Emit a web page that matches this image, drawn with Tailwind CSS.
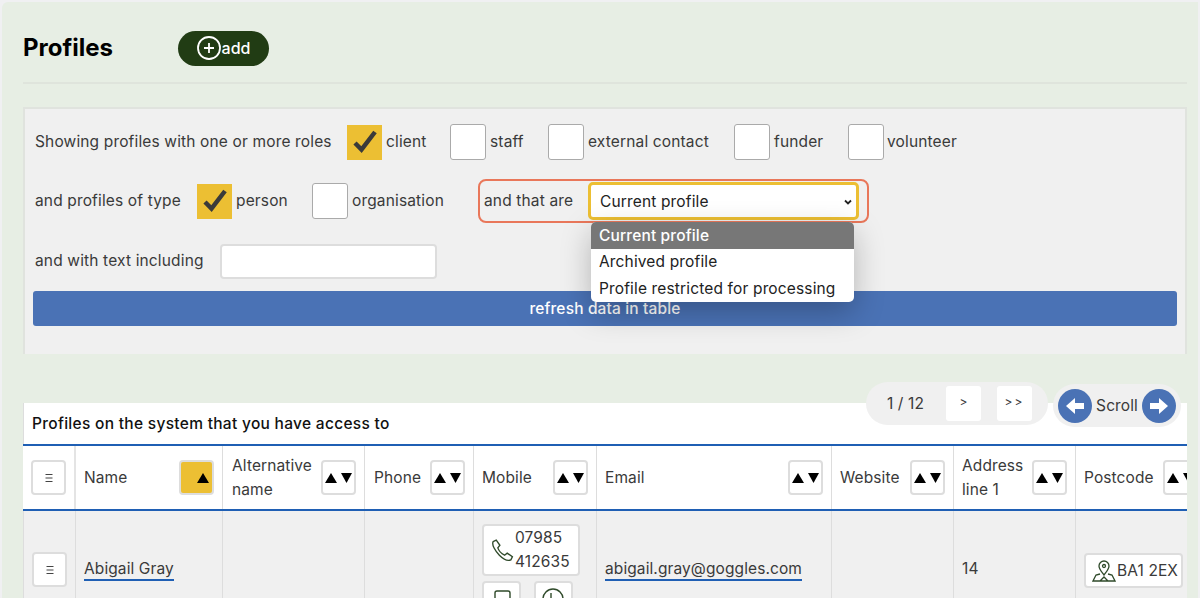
<!doctype html>
<html lang="en">
  <head>
    <meta charset="UTF-8" />
    <title>Profiles</title>
    <script src="https://cdn.jsdelivr.net/npm/@tailwindcss/browser@4"></script>
  </head>
  <body class="bg-[#f0f0f2]">
    <div class="relative h-[598px] w-[1200px] overflow-hidden pl-[2px] pt-[2px] font-['Inter',sans-serif] text-[#3a3a3a]">
      <main class="h-[596px] w-[1196px] rounded-tl-[6px] bg-[#e7eee4] pl-[21px] pr-[11px]">

        <!-- Title -->
        <header class="flex h-[82px] items-center border-b-2 border-[#dfe4dc] pt-[12px]">
          <h1 class="w-[155px] text-[24px] font-bold text-black">Profiles</h1>
          <button class="flex h-[35px] w-[91px] items-center justify-center gap-[1px] rounded-full bg-[#213c14] text-[16px] font-medium text-white">
            <svg class="h-6 w-6" viewBox="0 0 24 24" fill="none" stroke="currentColor" stroke-width="1.8"><circle cx="12" cy="12" r="11"/><path d="M12 7v10M7 12h10"/></svg>
            add
          </button>
        </header>

        <!-- Filters -->
        <section class="relative mt-[23px] h-[247px] border-x-2 border-t-2 border-[#e0e3de] bg-[#f0f0f0] px-[10px] text-[15.5px] tracking-[0.15px]">
          <div class="mt-[15px] flex h-[36px] items-center">
            <span class="w-[312px]">Showing profiles with one or more roles</span>
            <span class="flex h-[35px] w-[35px] items-center justify-center bg-[#ecbf33]">
              <svg class="h-7 w-7" viewBox="0 0 28 28" fill="none" stroke="#3a3a3a" stroke-width="4.5"><path d="M4 15l6.5 6.5L24 4"/></svg>
            </span>
            <span class="ml-[4px] w-[64px]">client</span>
            <span class="h-[36px] w-[36px] rounded-[3px] border border-[#aaa] bg-white"></span>
            <span class="ml-[4px] w-[58px]">staff</span>
            <span class="h-[36px] w-[36px] rounded-[3px] border border-[#aaa] bg-white"></span>
            <span class="ml-[4px] w-[146px]">external contact</span>
            <span class="h-[36px] w-[36px] rounded-[3px] border border-[#aaa] bg-white"></span>
            <span class="ml-[4px] w-[74px]">funder</span>
            <span class="h-[36px] w-[36px] rounded-[3px] border border-[#aaa] bg-white"></span>
            <span class="ml-[3px]">volunteer</span>
          </div>

          <div class="mt-[23px] flex h-[36px] items-center">
            <span class="w-[162px]">and profiles of type</span>
            <span class="flex h-[35px] w-[35px] items-center justify-center bg-[#ecbf33]">
              <svg class="h-7 w-7" viewBox="0 0 28 28" fill="none" stroke="#3a3a3a" stroke-width="4.5"><path d="M4 15l6.5 6.5L24 4"/></svg>
            </span>
            <span class="ml-[4px] w-[76px]">person</span>
            <span class="h-[36px] w-[36px] rounded-[3px] border border-[#aaa] bg-white"></span>
            <span class="ml-[4px] w-[126px]">organisation</span>
            <div class="flex h-[44px] w-[391px] items-center rounded-[8px] border-2 border-[#e9775a] pl-[4px]">
              <span class="w-[104px]">and that are</span>
              <div class="flex h-[38px] w-[271px] items-center justify-between rounded-[5px] border-[3px] border-[#ecbf33] bg-white pl-[9px] pr-[3px] pt-[1px] text-[#222]">
                Current profile
                <svg class="h-[10px] w-[10px]" viewBox="0 0 10 10" fill="none" stroke="#222" stroke-width="1.8"><path d="M2 3.5l3 3 3-3"/></svg>
              </div>
            </div>
          </div>

          <div class="mt-[24px] flex h-[36px] items-center">
            <span class="w-[185px]">and with text including</span>
            <span class="h-[35px] w-[217px] rounded-[4px] border-2 border-[#ddd] bg-white"></span>
          </div>

          <button class="-mx-[2px] mt-[12px] block h-[35px] w-[calc(100%+4px)] rounded-[3px] bg-[#4a72b5] text-[15.5px] font-medium text-white">refresh data in table</button>

          <!-- Open select list -->
          <div class="absolute left-[566px] top-[113px] z-10 w-[263px] overflow-hidden rounded-[5px] bg-white text-[#222] shadow-[0_10px_30px_rgba(0,0,0,0.25)]">
            <div class="flex h-[27px] items-center bg-[#777] pl-[8px] pt-[1px] font-medium text-white">Current profile</div>
            <div class="flex h-[26px] items-center pl-[8px]">Archived profile</div>
            <div class="flex h-[27px] items-center pl-[8px] pt-[1px]">Profile restricted for processing</div>
          </div>
        </section>

        <!-- Table -->
        <section class="relative mt-[49px] bg-white text-[15.5px] tracking-[0.1px]">
          <div class="flex h-[41px] items-center border-l border-[#ddd] pl-[8px] font-medium tracking-[0.3px] text-[#111]">Profiles on the system that you have access to</div>

          <div class="grid h-[67px] grid-cols-[53px_147px_142px_109px_123px_235px_122px_122px_111px] overflow-hidden border-y-2 border-[#1f5fb4]">
            <div class="flex items-center justify-center border-r-2 border-[#e4e4e4]">
              <span class="flex h-[35px] w-[35px] items-center justify-center rounded-[4px] border-2 border-[#ddd] text-[#444]">
                <svg class="h-[10px] w-[10px]" viewBox="0 0 10 10" stroke="#444" stroke-width="1"><path d="M1.5 1.5h7M1.5 5h7M1.5 8.5h7"/></svg>
              </span>
            </div>
            <div class="flex items-center justify-between border-r border-[#ddd] px-[8px]">
              Name
              <span class="flex h-[35px] w-[35px] items-center justify-end rounded-[4px] border-2 border-[#ddd] bg-[#ecbf33] pr-[3px]">
                <svg class="h-[10px] w-[12px]" viewBox="0 0 12 10"><path d="M6 0L12 10H0z"/></svg>
              </span>
            </div>
            <div class="flex items-center justify-between border-r border-[#ddd] pl-[9px] pr-[8px] leading-[24px]">
              <span>Alternative<br>name</span>
              <span class="flex h-[35px] w-[35px] shrink-0 items-center justify-center gap-[4px] rounded-[4px] border-2 border-[#ddd]">
                <svg class="h-[10px] w-[12px]" viewBox="0 0 12 10"><path d="M6 0L12 10H0z"/></svg>
                <svg class="h-[10px] w-[11px]" viewBox="0 0 11 10"><path d="M5.5 10L11 0H0z"/></svg>
              </span>
            </div>
            <div class="flex items-center justify-between border-r border-[#ddd] pl-[9px] pr-[8px]">
              Phone
              <span class="flex h-[35px] w-[35px] shrink-0 items-center justify-center gap-[4px] rounded-[4px] border-2 border-[#ddd]">
                <svg class="h-[10px] w-[12px]" viewBox="0 0 12 10"><path d="M6 0L12 10H0z"/></svg>
                <svg class="h-[10px] w-[11px]" viewBox="0 0 11 10"><path d="M5.5 10L11 0H0z"/></svg>
              </span>
            </div>
            <div class="flex items-center justify-between border-r border-[#ddd] px-[8px]">
              Mobile
              <span class="flex h-[35px] w-[35px] shrink-0 items-center justify-center gap-[4px] rounded-[4px] border-2 border-[#ddd]">
                <svg class="h-[10px] w-[12px]" viewBox="0 0 12 10"><path d="M6 0L12 10H0z"/></svg>
                <svg class="h-[10px] w-[11px]" viewBox="0 0 11 10"><path d="M5.5 10L11 0H0z"/></svg>
              </span>
            </div>
            <div class="flex items-center justify-between border-r border-[#ddd] px-[8px]">
              Email
              <span class="flex h-[35px] w-[35px] shrink-0 items-center justify-center gap-[4px] rounded-[4px] border-2 border-[#ddd]">
                <svg class="h-[10px] w-[12px]" viewBox="0 0 12 10"><path d="M6 0L12 10H0z"/></svg>
                <svg class="h-[10px] w-[11px]" viewBox="0 0 11 10"><path d="M5.5 10L11 0H0z"/></svg>
              </span>
            </div>
            <div class="flex items-center justify-between border-r border-[#ddd] px-[8px]">
              Website
              <span class="flex h-[35px] w-[35px] shrink-0 items-center justify-center gap-[4px] rounded-[4px] border-2 border-[#ddd]">
                <svg class="h-[10px] w-[12px]" viewBox="0 0 12 10"><path d="M6 0L12 10H0z"/></svg>
                <svg class="h-[10px] w-[11px]" viewBox="0 0 11 10"><path d="M5.5 10L11 0H0z"/></svg>
              </span>
            </div>
            <div class="flex items-center justify-between border-r border-[#ddd] px-[8px] leading-[24px]">
              <span>Address<br>line 1</span>
              <span class="flex h-[35px] w-[35px] shrink-0 items-center justify-center gap-[4px] rounded-[4px] border-2 border-[#ddd]">
                <svg class="h-[10px] w-[12px]" viewBox="0 0 12 10"><path d="M6 0L12 10H0z"/></svg>
                <svg class="h-[10px] w-[11px]" viewBox="0 0 11 10"><path d="M5.5 10L11 0H0z"/></svg>
              </span>
            </div>
            <div class="flex items-center justify-between pl-[8px]">
              Postcode
              <span class="-mr-[11px] flex h-[35px] w-[35px] shrink-0 items-center justify-center gap-[4px] rounded-[4px] border-2 border-[#ddd] bg-white">
                <svg class="h-[10px] w-[12px]" viewBox="0 0 12 10"><path d="M6 0L12 10H0z"/></svg>
                <svg class="h-[10px] w-[11px]" viewBox="0 0 11 10"><path d="M5.5 10L11 0H0z"/></svg>
              </span>
            </div>
          </div>

          <div class="grid h-[90px] grid-cols-[53px_147px_142px_109px_123px_235px_122px_122px_111px] grid-rows-[90px] overflow-hidden bg-[#f0f0f0]">
            <div class="flex items-center justify-center border-x border-[#ddd] pt-[27px]">
              <span class="flex h-[35px] w-[35px] items-center justify-center rounded-[4px] border-2 border-[#ddd] bg-white">
                <svg class="h-[10px] w-[10px]" viewBox="0 0 10 10" stroke="#444" stroke-width="1"><path d="M1.5 1.5h7M1.5 5h7M1.5 8.5h7"/></svg>
              </span>
            </div>
            <div class="flex items-center border-r border-[#ddd] pl-[8px] pt-[28px]">
              <a class="border-b-2 border-[#1f5fb4] leading-[20px]">Abigail Gray</a>
            </div>
            <div class="border-r border-[#ddd]"></div>
            <div class="border-r border-[#ddd]"></div>
            <div class="border-r border-[#ddd] pl-[8px] pt-[13px]">
              <div class="flex h-[52px] w-[98px] items-center rounded-[4px] border-2 border-[#ddd] bg-white pl-[6px] leading-[24px]">
                <svg class="h-[27px] w-[25px] shrink-0" viewBox="0 0 24 24" fill="none" stroke="#2f4a2a" stroke-width="1.3"><path d="M3 3.500l3-1.500 3.500 5-2 2.500c1 3 3.500 5.500 6.500 7l2.500-2 5 3.500-1.500 3c-3 1.500-7-.5-11-4.500S1.500 6.500 3 3.500z"/></svg>
                <span>07985<br>412635</span>
              </div>
              <div class="mt-[5px] flex gap-[13px]">
                <span class="h-[35px] w-[39px] rounded-[4px] border-2 border-[#ddd] bg-white pl-[6px] pt-[6px]">
                  <svg class="h-[22px] w-[24px]" viewBox="0 0 24 22" fill="none" stroke="#2f4a2a" stroke-width="1.4"><path d="M5 18V4a2 2 0 0 1 2-2h11a2 2 0 0 1 2 2v11a2 2 0 0 1-2 2H8"/><path d="M1 20c2 0 4-1 4-4"/></svg>
                </span>
                <span class="h-[35px] w-[39px] rounded-[4px] border-2 border-[#ddd] bg-white pl-[5px] pt-[4px]">
                  <svg class="h-[24px] w-[24px]" viewBox="0 0 24 24" fill="none" stroke="#2f4a2a" stroke-width="1.4"><circle cx="12" cy="12" r="10"/><path d="M10 6v6c0 2 4 2 4 0"/></svg>
                </span>
              </div>
            </div>
            <div class="flex items-center border-r border-[#ddd] pl-[8px] pt-[28px]">
              <a class="border-b-2 border-[#1f5fb4] leading-[20px]">abigail.gray@goggles.com</a>
            </div>
            <div class="border-r border-[#ddd]"></div>
            <div class="flex items-center border-r border-[#ddd] pl-[8px] pt-[26px]">14</div>
            <div class="pl-[8px] pt-[42px]">
              <span class="flex h-[35px] w-[99px] items-center gap-[1px] whitespace-nowrap rounded-[4px] border-2 border-[#ddd] bg-white pl-[6px]">
                <svg class="h-6 w-6 shrink-0" viewBox="0 0 24 24" fill="none" stroke="#2f4a2a" stroke-width="1.3"><path d="M12 16c-3-4-5-6-5-9a5 5 0 0 1 10 0c0 3-2 5-5 9z"/><circle cx="12" cy="7" r="1.500"/><path d="M8 15l-4 1-3 6h22l-3-6-4-1M8 22l4-4 4 4"/></svg>
                BA1 2EX
              </span>
            </div>
          </div>

          <!-- Pagination over the table corner -->
          <div class="absolute right-[139px] top-[-21px] flex h-[43px] w-[182px] items-center rounded-full bg-[#f0f0f0] pl-[21px] pr-[16px]">
            <span class="w-[58px]">1 / 12</span>
            <span class="ml-[1px] flex h-[35px] w-[35px] items-center justify-center rounded-[3px] bg-white pb-[4px] text-[12px]">&gt;</span>
            <span class="ml-[16px] flex h-[35px] w-[35px] items-center justify-center rounded-[3px] bg-white pb-[4px] text-[12px] tracking-[2px]">&gt;&gt;</span>
          </div>
          <div class="absolute right-[6px] top-[-19px] flex h-[43px] w-[128px] items-center justify-between rounded-full bg-[#f0f0f0] px-[5px]">
            <span class="flex h-[34px] w-[34px] items-center justify-center rounded-full bg-[#4a72b5]">
              <svg class="h-5 w-5" viewBox="0 0 20 20" fill="white"><path d="M1 10l9-8v5h9v6h-9v5z"/></svg>
            </span>
            Scroll
            <span class="flex h-[34px] w-[34px] items-center justify-center rounded-full bg-[#4a72b5]">
              <svg class="h-5 w-5" viewBox="0 0 20 20" fill="white"><path d="M19 10l-9-8v5H1v6h9v5z"/></svg>
            </span>
          </div>
        </section>
      </main>
    </div>
  </body>
</html>
